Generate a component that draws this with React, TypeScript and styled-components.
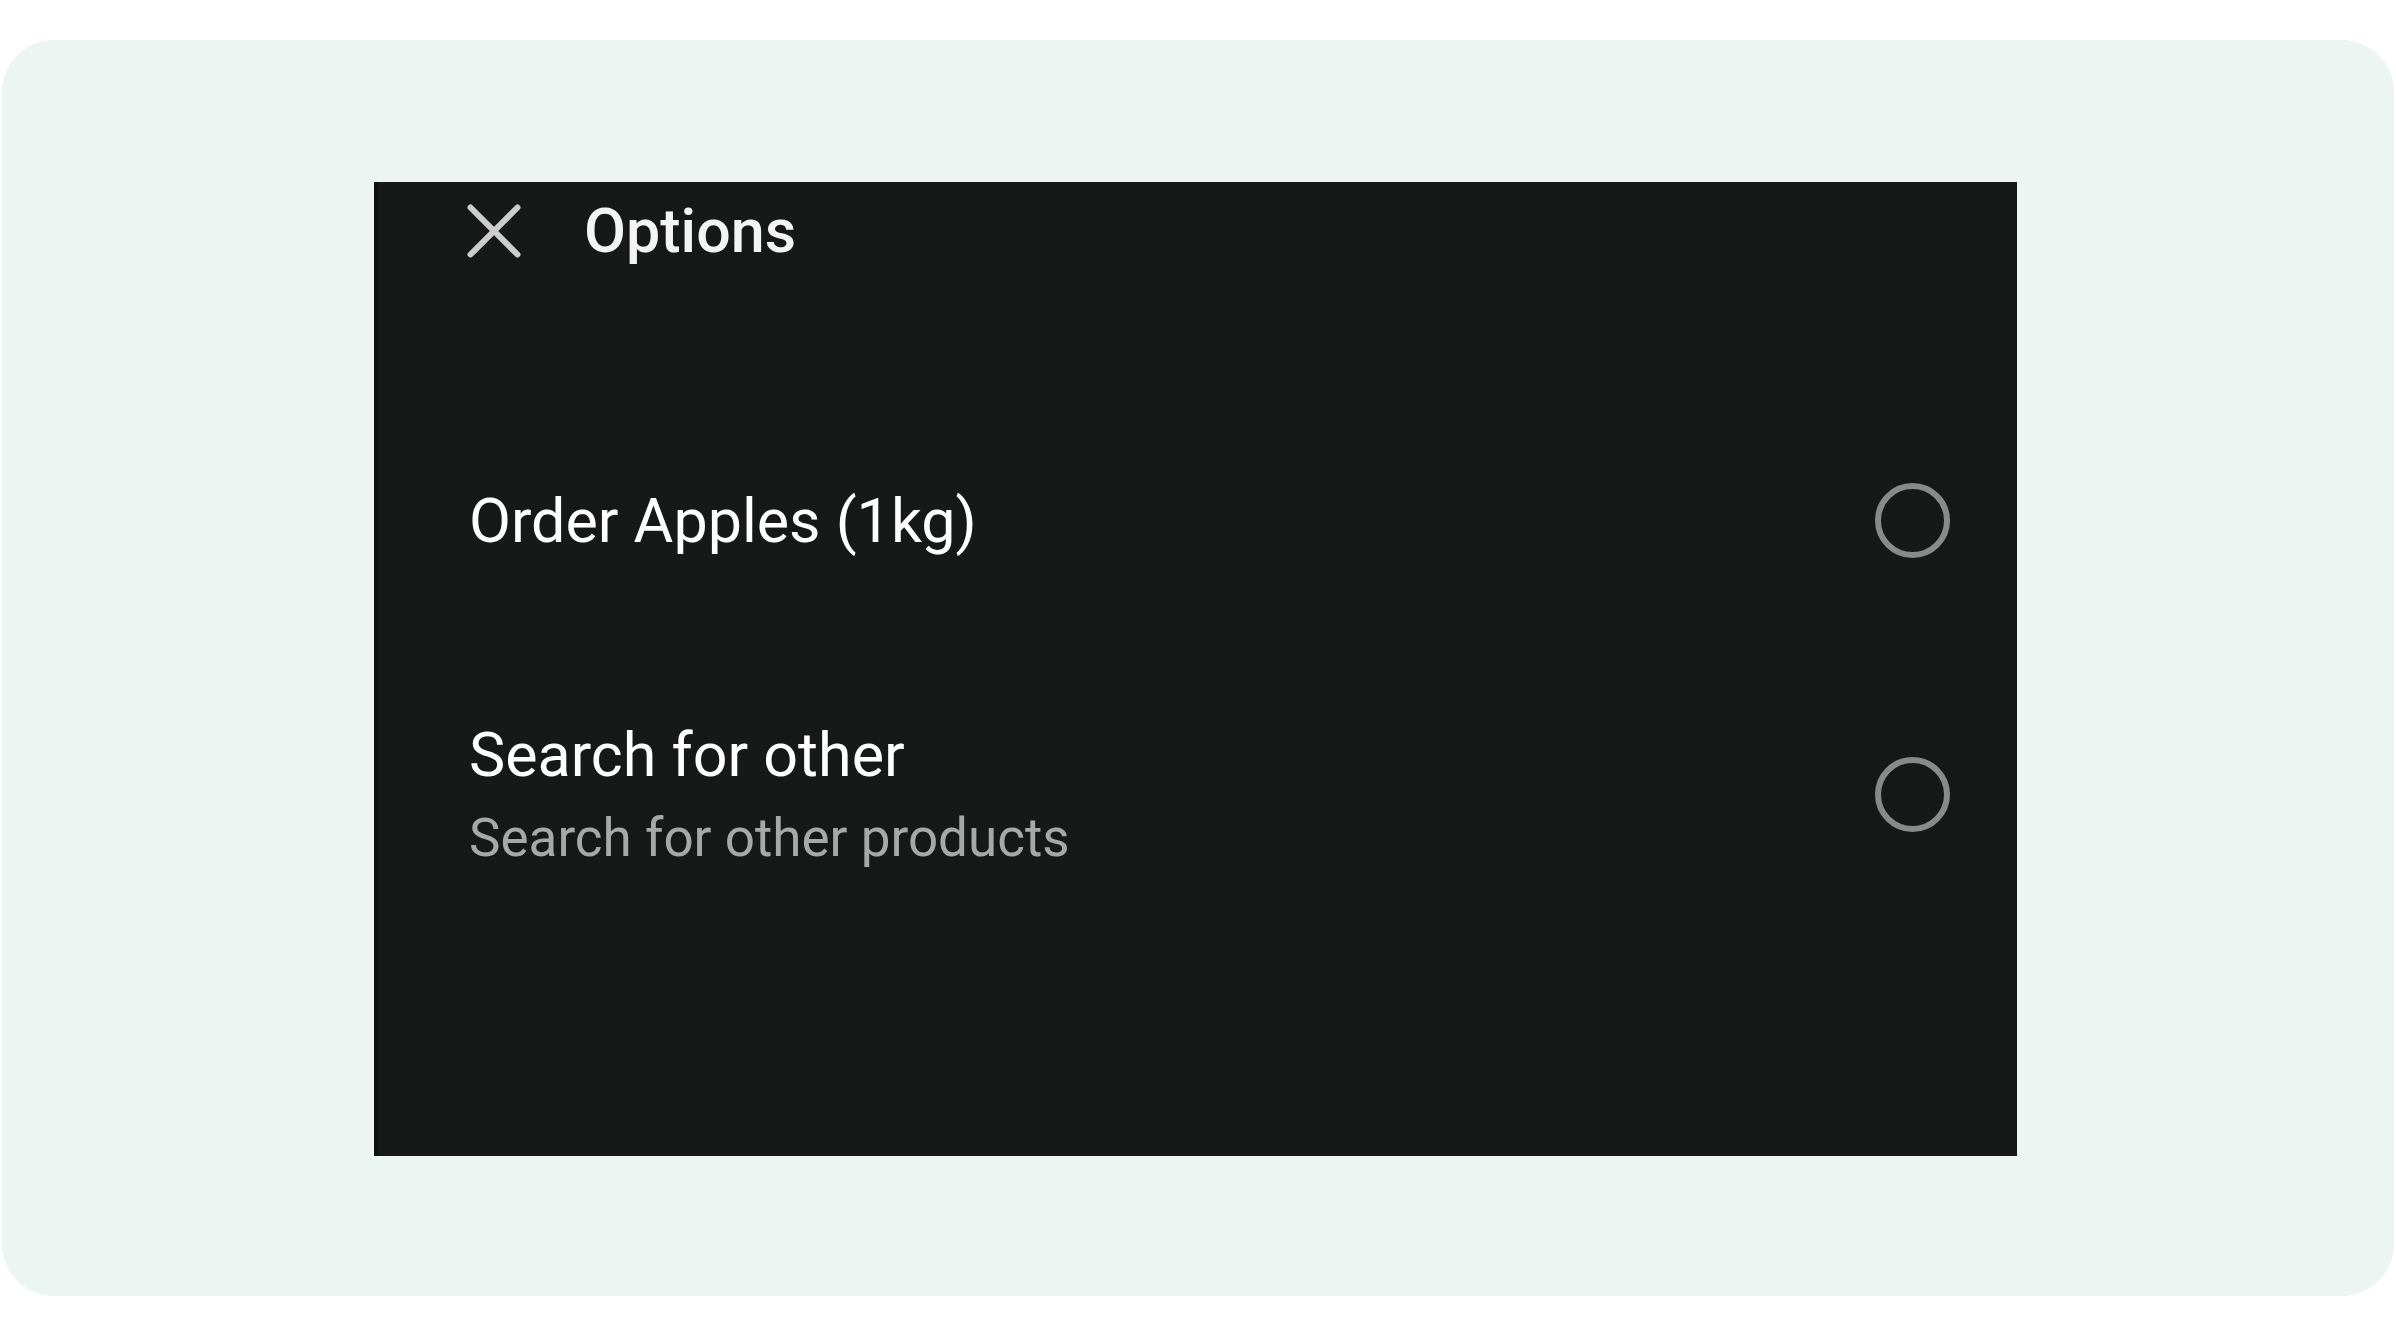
import React from "react";
import styled, { createGlobalStyle } from "styled-components";

const GlobalStyle = createGlobalStyle`
  html, body {
    margin: 0;
    padding: 0;
    background: #ffffff;
  }
  body {
    font-family: Roboto, "Noto Sans", "Liberation Sans", sans-serif;
    -webkit-font-smoothing: antialiased;
  }
`;

const Page = styled.div`
  padding: 40px 2px 40px 2px;
`;

const Card = styled.div`
  background: #ecf5f1;
  border-radius: 52px;
  padding: 142px 377px 140px 372px;
`;

const Sheet = styled.div`
  height: 974px;
  box-sizing: border-box;
  background: #171918;
  border-left: 4px solid #0f1010;
  display: flex;
  flex-direction: column;
`;

const Header = styled.div`
  display: flex;
  align-items: center;
  height: 72px;
  padding: 13px 0 0 89px;
`;

const CloseButton = styled.button`
  display: flex;
  align-items: center;
  justify-content: center;
  width: 54px;
  height: 54px;
  padding: 0;
  border: 0;
  background: transparent;
  cursor: pointer;
  margin-right: 63px;
`;

const Title = styled.h1`
  margin: 0;
  font-size: 61px;
  line-height: 72px;
  font-weight: 500;
  color: #f4f4f4;
`;

const List = styled.div`
  display: flex;
  flex-direction: column;
  gap: 161px;
  margin-top: 216px;
`;

const Row = styled.label`
  display: flex;
  align-items: center;
  justify-content: space-between;
  padding: 0 67px 0 91px;
  cursor: pointer;
`;

const Texts = styled.div`
  display: flex;
  flex-direction: column;
`;

const Label = styled.span`
  font-size: 61px;
  line-height: 72px;
  font-weight: 400;
  color: #ffffff;
`;

const Hint = styled.span`
  margin-top: 15px;
  font-size: 53px;
  line-height: 64px;
  font-weight: 400;
  color: #a8a8a8;
`;

const Radio = styled.span<{ checked?: boolean }>`
  width: 75px;
  height: 75px;
  box-sizing: border-box;
  border-radius: 50%;
  border: 6px solid ${(props) => (props.checked ? "#a8c7fa" : "#8a8a8a")};
  flex: 0 0 auto;
`;

const CloseIcon = () => (
  <svg width="54" height="54" viewBox="0 0 54 54">
    <path
      d="M3.5 3.5 L50.5 50.5 M50.5 3.5 L3.5 50.5"
      stroke="#cdcdcd"
      strokeWidth="6"
      strokeLinecap="round"
      fill="none"
    />
  </svg>
);

const options = [
  { id: "apples", label: "Order Apples (1kg)" },
  { id: "other", label: "Search for other", hint: "Search for other products" },
];

export default function App() {
  return (
    <>
      <GlobalStyle />
      <Page>
        <Card>
          <Sheet>
            <Header>
              <CloseButton aria-label="Close">
                <CloseIcon />
              </CloseButton>
              <Title>Options</Title>
            </Header>
            <List>
              {options.map((o) => (
                <Row key={o.id}>
                  <Texts>
                    <Label>{o.label}</Label>
                    {o.hint && <Hint>{o.hint}</Hint>}
                  </Texts>
                  <Radio />
                </Row>
              ))}
            </List>
          </Sheet>
        </Card>
      </Page>
    </>
  );
}
